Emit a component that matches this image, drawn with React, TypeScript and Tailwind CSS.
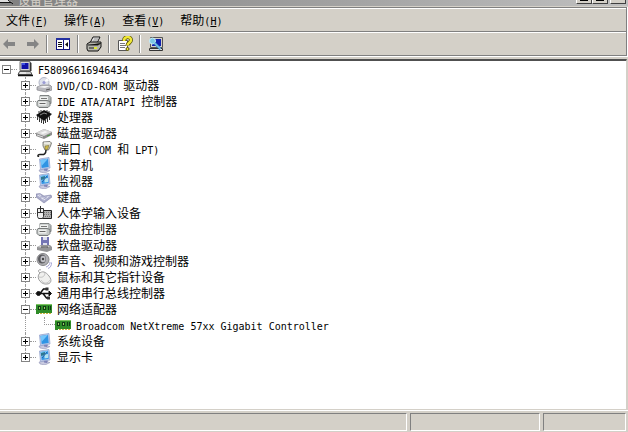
import React, { useState } from "react";

type Kind =
  | "root" | "disc" | "ctrl" | "chip" | "drive" | "port" | "monitor" | "screen" | "keyboard"
  | "hid" | "floppy" | "sound" | "mouse" | "usb" | "net";

function Label({ text }: { text: string }) {
  const parts = text.match(/[\x20-\x7e]+|[^\x20-\x7e]+/g) ?? [];
  return (
    <>
      {parts.map((p, i) =>
        p.charCodeAt(0) < 127 ? (
          <span key={i} className="font-['DejaVu_Sans_Mono',monospace] text-[10px] leading-none">{p}</span>
        ) : (
          <span key={i}>{p}</span>
        ),
      )}
    </>
  );
}

function Glyph({ kind }: { kind: Kind }) {
  switch (kind) {
    case "root":
      return (
        <g>
          <path d="M3 .5h10v9H3z" fill="#d4d4d4" stroke="#777" />
          <path d="M4.500 2h7v6h-7z" fill="#1010a8" />
          <path d="M5 2h3v2H5z" fill="#3c50e0" />
          <path d="M13 1l1.500 1v8H13z" fill="#333" />
          <path d="M2.500 10.500h11l1.500 3H1z" fill="#ccc" stroke="#555" />
          <path d="M1 14.500h15" stroke="#111" strokeWidth="1.500" />
          <path d="M3 12h6" stroke="#fff" />
        </g>
      );
    case "disc":
      return (
        <g>
          <circle cx="8" cy="5.500" r="5" fill="#dfe2ec" stroke="#b0b5c4" />
          <path d="M8 5l3-4 2 3z" fill="#fff" />
          <circle cx="8" cy="5.500" r="1.600" fill="#9a9bd4" />
          <path d="M1 10l5-2h8l2 2v3l-6 2-9-2z" fill="#b8b8bd" stroke="#88888e" strokeWidth=".7" />
          <path d="M2 10l5-1h7l-5 2z" fill="#f2f2f2" />
          <path d="M10 13l4-1" stroke="#555" />
        </g>
      );
    case "ctrl":
      return (
        <g strokeLinejoin="round">
          <path d="M4 2.500h9l2 2v6H4z" fill="#b4b8b8" stroke="#808484" />
          <path d="M4 3.500h8v4H4z" fill="#eef0ef" />
          <path d="M5 5.500h6" stroke="#777" />
          <path d="M2 7.500h9l3 1v4l-2 2H3l-2-2V9z" fill="#c2c6c5" stroke="#767a7a" />
          <path d="M2.500 8.500h8v4h-8z" fill="#eef0ef" />
          <path d="M3.500 10.500h6" stroke="#666" />
        </g>
      );
    case "chip":
      return (
        <g>
          <path d="M1.500 6v5M3.500 7v6M5.500 8v6M7.500 9v6M9.500 8v6M11.500 7v6M13.500 6v5" stroke="#333" />
          <path d="M3 4V2M5 3V1M11 3V1M13 4V2" stroke="#333" />
          <path d="M0 6l8-5 8 4-8 7z" fill="#111" />
          <path d="M4 6l4-2 3 1" stroke="#888" fill="none" />
          <path d="M1 8l7 4 7-6" stroke="#777" fill="none" strokeWidth=".6" />
        </g>
      );
    case "drive":
      return (
        <g>
          <path d="M0 8l8-4 8 3v3l-8 4-8-3z" fill="#8c8c8c" />
          <path d="M0 8l8-4 8 3-8 4z" fill="#d8d8d8" />
          <path d="M4 8l5-2 3 1-5 2z" fill="#f6f6f6" />
          <path d="M1 10l6 2" stroke="#ddd" />
          <path d="M11 11l3-1" stroke="#4c9a42" />
        </g>
      );
    case "port":
      return (
        <g>
          <path d="M7 1l7-.5 1.500 1.500-1 3-2 4H9L7 5z" fill="#d8d8c8" stroke="#666" strokeWidth=".8" />
          <path d="M8 2h6" stroke="#fff" />
          <path d="M9 5l4-.5-1.500 4H9z" fill="#cdb94a" stroke="#685d28" strokeWidth=".5" />
          <path d="M10 9c0 4-2 5-5 4.500-3-.5-4 1.500-2 2.500" fill="none" stroke="#222" strokeWidth="1.500" />
        </g>
      );
    case "monitor":
    case "screen":
      return (
        <g>
          <path d="M3 13l6-1 5 1.500-5 2.500-5-1z" fill="#c8cae0" stroke="#8587ac" strokeWidth=".5" />
          <path d="M8 11l4 .5-1 2.500-3-.5z" fill="#7f83b8" />
          <path d="M3.500 2L13 .5 14 11l-9.500 1.500z" fill="#c0cdec" stroke="#8b9cc8" strokeWidth=".7" />
          <path d="M4.500 3L12 1.800l.7 8.200-7 1z" fill="#2f94e4" />
          <path d="M4.500 3L12 1.800 5.500 9z" fill="#74c6fa" />
          {kind === "screen" && (
            <g>
              <path d="M5 4l4-1v3l-4 1z" fill="#2f7890" />
              <path d="M8.500 5.500l3.500-.5v4l-3.500.5z" fill="#b4e4f0" />
              <path d="M6 9l5-6" stroke="#2a62a4" />
            </g>
          )}
        </g>
      );
    case "keyboard":
      return (
        <g>
          <path d="M0 5l4-.5L8 7l7-1 1 2-8 6-8-6z" fill="#a9abc9" stroke="#7678a0" strokeWidth=".5" />
          <path d="M1 6l3-.5L8 8l6-1-6 4.500z" fill="#e4e5f2" />
          <path d="M3 6.500l7 3.500M5 6.500l6 2.500M4 9l3-2M7 10.500l4-3" stroke="#9799bc" strokeWidth=".6" />
        </g>
      );
    case "hid":
      return (
        <g>
          <path d="M7 5.500h8.500v8H5z" fill="#b0b0b0" stroke="#222" />
          <path d="M8 7.500h7M8 9.500h7M7 11.500h8" stroke="#666" strokeWidth=".8" strokeDasharray="1 1" />
          <path d="M1.500 3.500h6v8l-1 2h-4l-1-2z" fill="#eee" stroke="#333" />
          <path d="M4.500 1v6M1.500 7.500h6" stroke="#333" fill="none" />
        </g>
      );
    case "floppy":
      return (
        <g>
          <path d="M5 0h8v9H5z" fill="#dedfec" />
          <path d="M5 0h2v9H5zM11 0h2v9h-2z" fill="#7475b4" />
          <path d="M7 3h4v3H7z" fill="#7475b4" />
          <path d="M1 10l4-2h9l2 2v3l-5 2-10-2z" fill="#949496" />
          <path d="M1 10l4-1h9l-4 2z" fill="#ddd" />
          <path d="M5 10h7" stroke="#333" />
        </g>
      );
    case "sound":
      return (
        <g>
          <ellipse cx="7" cy="6.500" rx="6" ry="6" fill="#b0b0b4" stroke="#858588" />
          <ellipse cx="6" cy="6" rx="4" ry="4.500" fill="#5c5c60" />
          <ellipse cx="7" cy="6" rx="2.500" ry="3.200" fill="#c0c0c6" />
          <circle cx="7" cy="6" r="1.200" fill="#444" />
          <path d="M10 14c3-1 4-3 4-5M12 15.500c3-1 3.500-3.500 3.500-6" fill="none" stroke="#9b9bd0" strokeWidth=".9" />
        </g>
      );
    case "mouse":
      return (
        <g>
          <path d="M4 4C1 2 3 0 5 1" fill="none" stroke="#999" />
          <path d="M3 5c3-4 7-2 10 2 4 5 1 8-2 8-5 1-11-5-8-10z" fill="#f0f0ee" stroke="#a0a0a0" />
          <path d="M3 8c4 1 6-1 6-5" fill="none" stroke="#b4b4b4" strokeWidth=".8" />
          <path d="M5 11c2 4 7 4 9 0" fill="none" stroke="#c8c8c8" />
        </g>
      );
    case "usb":
      return (
        <g stroke="#111" fill="none">
          <path d="M1 8.500h13M4 8.500L7.500 4H11M7 8.500l3.500 4.500H13" strokeWidth="1.500" />
          <circle cx="2.500" cy="8.500" r="2" fill="#111" />
          <path d="M13 6l2.500 2.500L13 11z" fill="#111" />
          <path d="M9.500 2.500h3v3h-3zM11 11.500h3v3h-3z" fill="#333" stroke="none" />
        </g>
      );
    case "net":
      return (
        <g shapeRendering="crispEdges">
          <path d="M0 3h16v9H3v1H0z" fill="#2f8c28" />
          <path d="M0 3h16v1H0z" fill="#7cc462" />
          <path d="M2 5h3v4H2zM7 5h3v4H7z" fill="#123d16" />
          <path d="M3 6h1v2H3zM8 6h1v2H8z" fill="#9ccc65" />
          <path d="M12 5h1v4h-1zM14 5h1v4h-1z" fill="#123d16" />
          <path d="M4 12h2v1H4zM7 12h2v1H7zM10 12h2v1h-2zM13 12h2v1h-2z" fill="#cbb23a" />
        </g>
      );
  }
}

function DeviceIcon({ kind }: { kind: Kind }) {
  return (
    <svg viewBox="0 0 16 16" className="h-4 w-4 shrink-0" aria-hidden="true">
      <Glyph kind={kind} />
    </svg>
  );
}

function Toggle({ open, label, onClick }: { open: boolean; label: string; onClick: () => void }) {
  return (
    <button type="button" aria-label={label} aria-expanded={open} onClick={onClick} className="h-[9px] w-[9px] shrink-0 bg-white">
      <svg viewBox="0 0 9 9" className="h-[9px] w-[9px]" shapeRendering="crispEdges" aria-hidden="true">
        <path d="M.5 .5h8v8h-8z" fill="#fff" stroke="#848484" />
        <path d={open ? "M2 4.500h5" : "M2 4.500h5M4.500 2v5"} stroke="#000" />
      </svg>
    </button>
  );
}

interface Device { name: string; icon: Kind; children?: string[] }

const devices: Device[] = [
  { name: "DVD/CD-ROM 驱动器", icon: "disc" },
  { name: "IDE ATA/ATAPI 控制器", icon: "ctrl" },
  { name: "处理器", icon: "chip" },
  { name: "磁盘驱动器", icon: "drive" },
  { name: "端口 (COM 和 LPT)", icon: "port" },
  { name: "计算机", icon: "monitor" },
  { name: "监视器", icon: "screen" },
  { name: "键盘", icon: "keyboard" },
  { name: "人体学输入设备", icon: "hid" },
  { name: "软盘控制器", icon: "ctrl" },
  { name: "软盘驱动器", icon: "floppy" },
  { name: "声音、视频和游戏控制器", icon: "sound" },
  { name: "鼠标和其它指针设备", icon: "mouse" },
  { name: "通用串行总线控制器", icon: "usb" },
  { name: "网络适配器", icon: "net", children: ["Broadcom NetXtreme 57xx Gigabit Controller"] },
  { name: "系统设备", icon: "monitor" },
  { name: "显示卡", icon: "screen" },
];

function Stem({ half }: { half?: boolean }) {
  return (
    <span className="flex h-full w-[9px] shrink-0 justify-center">
      <span className={half ? "h-2 border-l border-dotted border-[#999]" : "h-full border-l border-dotted border-[#999]"} />
    </span>
  );
}

function DeviceNode({ device, last }: { device: Device; last: boolean }) {
  const [open, setOpen] = useState(Boolean(device.children));
  return (
    <li>
      <div className="flex h-4 items-center pl-[21px]">
        <span className="grid h-4 w-[9px] shrink-0 place-items-center">
          <span className="col-start-1 row-start-1 h-full"><Stem half={last} /></span>
          <span className="z-10 col-start-1 row-start-1 flex">
            <Toggle open={open} label={device.name} onClick={() => setOpen(!open)} />
          </span>
        </span>
        <span className="w-1.5 shrink-0 border-t border-dotted border-[#999]" />
        <DeviceIcon kind={device.icon} />
        <span className="ml-[5px] whitespace-nowrap"><Label text={device.name} /></span>
      </div>
      {open && device.children && (
        <ul>
          {device.children.map((c) => (
            <li key={c} className="flex h-4 items-center pl-[21px]">
              <Stem />
              <span className="ml-3.5 h-2 w-[11px] shrink-0 self-start border-b border-l border-dotted border-[#999]" />
              <DeviceIcon kind="net" />
              <span className="ml-[5px] whitespace-nowrap"><Label text={c} /></span>
            </li>
          ))}
        </ul>
      )}
    </li>
  );
}

const menus = [["文件", "F"], ["操作", "A"], ["查看", "V"], ["帮助", "H"]];

function Tool({ label, disabled, divided, children }: { label: string; disabled?: boolean; divided?: boolean; children: React.ReactNode }) {
  return (
    <div className="flex items-center gap-[7px]">
      {divided && <span className="h-[18px] w-0.5 border-l border-r border-l-[#858585] border-r-white" />}
      <button type="button" aria-label={label} disabled={disabled} className="h-4 w-4">
        <svg viewBox="0 0 16 16" className="h-4 w-4" aria-hidden="true">{children}</svg>
      </button>
    </div>
  );
}

function CaptionButton({ label, mark, gap }: { label: string; mark?: boolean; gap?: boolean }) {
  return (
    <button
      type="button"
      aria-label={label}
      className={`${gap ? "ml-0.5 " : ""}flex h-1 w-4 justify-center border-b border-l border-r border-b-[#404040] border-l-white border-r-[#404040] bg-[#d4d0c8]`}
    >
      {mark && <span className="h-px w-2 bg-black" />}
    </button>
  );
}

export default function App() {
  return (
    <div className="flex min-h-screen flex-col bg-[#d4d0c8] font-['Noto_Sans_CJK_SC',sans-serif] text-[12px] leading-4 text-black">
      <header className="flex h-[7px] items-end justify-between overflow-hidden border-b border-[#d4d0c8] bg-linear-to-r from-[#808080] to-[#c0c0c0] pr-[2px]">
        <div className="flex items-end">
          <svg viewBox="0 0 16 6" className="h-1.5 w-4" aria-hidden="true">
            <path d="M0 0h9l3 2H0z" fill="#ddd" />
            <path d="M0 2.500h11M8 0l5 4" stroke="#111" fill="none" />
          </svg>
          <h1 className="ml-0.5 leading-[13px] text-[#d4d0c8]">设备管理器</h1>
        </div>
        <div className="flex self-start">
          <CaptionButton label="最小化" mark />
          <CaptionButton label="最大化" mark />
          <CaptionButton label="关闭" gap />
        </div>
      </header>

      <div className="border-b border-r border-white">
        <div className="border-r border-[#808080]">
          <nav className="flex h-[25px] items-center gap-4 border-b border-t border-[#808080] pl-1.5 shadow-[inset_0_1px_0_#fff]">
            {menus.map(([name, key]) => (
              <button type="button" key={key} className="whitespace-nowrap">
                {name}
                <span className="font-['DejaVu_Sans_Mono',monospace] text-[10px] leading-none">(<u>{key}</u>)</span>
              </button>
            ))}
          </nav>
          <div role="toolbar" aria-label="工具栏" className="flex h-6 items-center gap-1.5 border-b border-b-[#808080] pl-0.5 shadow-[inset_0_1px_0_#fff]">
            <Tool label="后退" disabled><path d="M1 8l5-5v3h7v4H6v3z" fill="#858585" /></Tool>
            <Tool label="前进" disabled><path d="M15 8l-5-5v3H3v4h7v3z" fill="#858585" /></Tool>
            <Tool label="显示/隐藏控制台树" divided>
              <g shapeRendering="crispEdges">
                <path d="M1.500 2.500h13v11h-13z" fill="#fff" stroke="#121480" />
                <path d="M1 3h14" stroke="#2430a0" strokeWidth="2" />
                <path d="M8.500 4v10" stroke="#121480" />
                <path d="M3 6.500h4M3 8.500h4M3 10.500h4" stroke="#111" />
              </g>
              <path d="M13 6v5l-3-2.500z" fill="#111" />
            </Tool>
            <Tool label="打印" divided>
              <path d="M4 7l3-6h7l-3 6" fill="#fff" stroke="#111" />
              <path d="M7.500 3h5M6.500 5h5" stroke="#777" />
              <path d="M1 8l3-2h11v5l-3 4H2l-1-2z" fill="#b4b4ac" stroke="#111" />
              <path d="M2 9h10l3-2M3 12h8" stroke="#222" />
              <path d="M8 12h3" stroke="#dce637" strokeWidth="2" />
            </Tool>
            <Tool label="帮助" divided>
              <path d="M1.500 4.500h9v10h-9z" fill="#fff" stroke="#555" />
              <path d="M3 7.500h5M3 9.500h6M3 11.500h5" stroke="#777" />
              <path d="M7 5c0-5 7-5 7-1 0 3-3.500 2.500-3.500 5.500" fill="none" stroke="#55500a" strokeWidth="4" />
              <path d="M7 5c0-5 7-5 7-1 0 3-3.500 2.500-3.500 5.500" fill="none" stroke="#f1e835" strokeWidth="2.500" />
              <circle cx="10.500" cy="13" r="1.500" fill="#f1e835" stroke="#55500a" />
            </Tool>
            <Tool label="扫描检测硬件改动" divided>
              <path d="M2.500 1.500h12v10h-12z" fill="#d4d0c8" stroke="#555" />
              <path d="M4 3h9v7H4z" fill="#1020b0" />
              <path d="M1.500 12.500h13v2h-13z" fill="#ddd" stroke="#333" />
              <circle cx="4.500" cy="5" r="3" fill="#7cc8e4" stroke="#c8eefa" />
              <path d="M6.500 7l6 6" stroke="#3c8cc8" strokeWidth="2.500" />
              <path d="M6.500 7l6 6" stroke="#a4e4f6" />
            </Tool>
          </div>
        </div>
      </div>

      <main className="mr-px mt-0.5 flex-1 border-b border-r border-t-2 border-b-[#d4d0c8] border-r-[#d4d0c8] border-t-[#505050] bg-white">
        <div className="flex h-4 items-center pl-0.5">
          <Toggle open label="F58096616946434" onClick={() => undefined} />
          <span className="w-1.5 border-t border-dotted border-[#999]" />
          <DeviceIcon kind="root" />
          <span className="ml-[5px] whitespace-nowrap"><Label text="F58096616946434" /></span>
        </div>
        <ul>
          {devices.map((d, i) => <DeviceNode key={d.name} device={d} last={i === devices.length - 1} />)}
        </ul>
      </main>

      <footer className="flex h-[22px] gap-[3px] border-t border-white pb-px pr-0.5 pt-0.5">
        <div className="flex-1 border-b border-r border-t border-b-white border-r-white border-t-[#808080]" />
        <div className="w-[130px] border border-b-white border-l-[#808080] border-r-white border-t-[#808080]" />
        <div className="w-[83px] border border-b-white border-l-[#808080] border-r-white border-t-[#808080]" />
      </footer>
    </div>
  );
}
